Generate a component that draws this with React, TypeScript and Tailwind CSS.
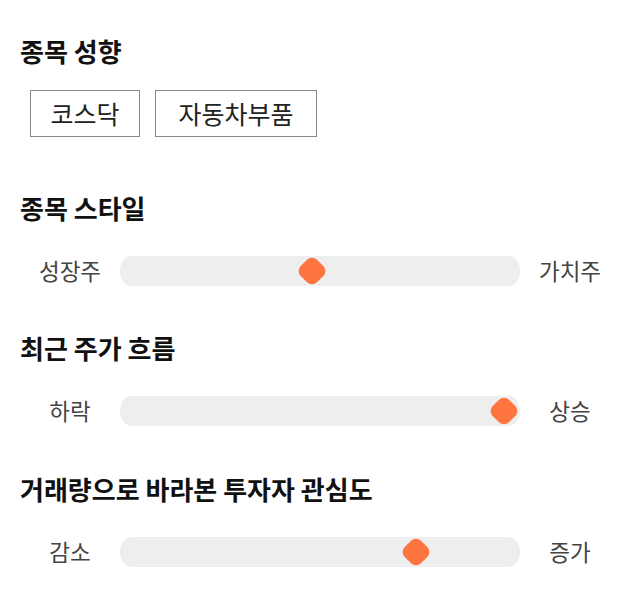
import React from "react";

const FONT = { fontFamily: '"Noto Sans CJK KR", "Noto Sans", sans-serif' };

function Slider({ left, right, value }: { left: string; right: string; value: number }) {
  return (
    <div className="flex h-[30px] items-center px-5">
      <div className="w-[100px] text-center text-[22.5px] text-[#444]">{left}</div>
      <div className="relative h-[30px] w-[400px] rounded-[11px/15px] bg-[#eeeeee]">
        <div
          className="absolute top-1/2 h-[23px] w-[23px] -translate-x-1/2 -translate-y-1/2 rotate-45 rounded-[7px] bg-[#ff7540]"
          style={{ left: `${value}%` }}
        />
      </div>
      <div className="w-[100px] text-center text-[22.5px] text-[#444]">{right}</div>
    </div>
  );
}

function Heading({ children, className = "" }: { children: React.ReactNode; className?: string }) {
  return (
    <h2 className={`h-[32px] pl-5 text-[26px] font-bold leading-[32px] text-[#111] ${className}`}>{children}</h2>
  );
}

export default function App() {
  return (
    <div className="h-[606px] w-[640px] bg-white pt-[35px]" style={FONT}>
      <Heading>종목 성향</Heading>
      <div className="mt-[23px] flex gap-[15px] pl-[30px]">
        <span className="flex h-[47px] w-[110px] items-center justify-center border border-[#888] text-[25px] text-[#222]">
          코스닥
        </span>
        <span className="flex h-[47px] w-[162px] items-center justify-center border border-[#888] text-[25px] text-[#222]">
          자동차부품
        </span>
      </div>
      <Heading className="mt-[55px]">종목 스타일</Heading>
      <div className="mt-[32px]">
        <Slider left="성장주" right="가치주" value={48} />
      </div>
      <Heading className="mt-[46px]">최근 주가 흐름</Heading>
      <div className="mt-[32px]">
        <Slider left="하락" right="상승" value={96} />
      </div>
      <Heading className="mt-[47px]">거래량으로 바라본 투자자 관심도</Heading>
      <div className="mt-[32px]">
        <Slider left="감소" right="증가" value={74} />
      </div>
    </div>
  );
}
